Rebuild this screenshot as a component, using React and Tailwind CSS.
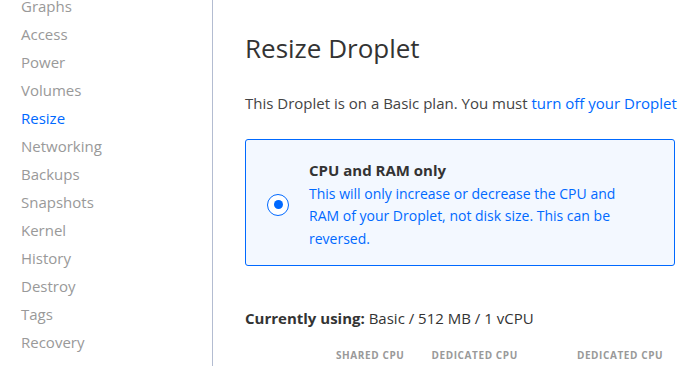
const NAV = ['Graphs', 'Access', 'Power', 'Volumes', 'Resize', 'Networking', 'Backups', 'Snapshots', 'Kernel', 'History', 'Destroy', 'Tags', 'Recovery']

export default function App() {
  const font = { fontFamily: '"Open Sans", "Liberation Sans", sans-serif' }
  return (
    <div className="flex h-[366px] w-[680px] overflow-hidden bg-white" style={font}>
      <aside className="w-[213px] shrink-0 border-r border-[#b3bcd1] pl-[21px]">
        <ul className="-mt-[6px]">
          {NAV.map((item) => (
            <li
              key={item}
              className={`h-[28px] leading-[24px] text-[15px] ${item === 'Resize' ? 'text-[#0069ff]' : 'text-[#999999]'}`}
            >
              {item}
            </li>
          ))}
        </ul>
      </aside>

      <main className="flex-1 min-w-0 pl-[32px] overflow-hidden">
        <h1 className="mt-[33px] text-[26px] leading-[30px] text-[#333333] whitespace-nowrap">Resize Droplet</h1>
        <p className="mt-[30px] text-[15px] leading-[20px] text-[#444444] whitespace-nowrap">
          This Droplet is on a Basic plan. You must <span className="text-[#0069ff]">turn off your Droplet</span> to resize it.
        </p>

        <div className="mt-[26px] w-[430px] h-[127px] rounded-[3px] border border-[#0069ff] bg-[#f3f8ff] flex items-center">
          <div className="w-[63px] shrink-0 flex justify-center pl-[1px] mt-[4px]">
            <div className="w-[22px] h-[22px] rounded-full border-[1.5px] border-[#0069ff] bg-white flex items-center justify-center">
              <div className="w-[9px] h-[9px] rounded-full bg-[#0069ff]" />
            </div>
          </div>
          <div className="w-[330px] pt-[4px]">
            <div className="text-[15px] font-bold leading-[22px] text-[#333333]">CPU and RAM only</div>
            <div className="mt-[2px] text-[14px] leading-[22.5px] text-[#0069ff]">
              This will only increase or decrease the CPU and RAM of your Droplet, not disk size. This can be reversed.
            </div>
          </div>
        </div>

        <div className="mt-[42px] text-[15px] leading-[20px] text-[#333333] whitespace-nowrap">
          <span className="font-bold">Currently using:</span> Basic / 512 MB / 1 vCPU
        </div>

        <div className="mt-[20px] flex text-[10px] font-bold tracking-[0.06em] text-[#999999] whitespace-nowrap leading-[14px]">
          <span className="ml-[91px]">SHARED CPU</span>
          <span className="ml-[27px]">DEDICATED CPU</span>
          <span className="ml-[59px]">DEDICATED CPU</span>
        </div>
      </main>
    </div>
  )
}
